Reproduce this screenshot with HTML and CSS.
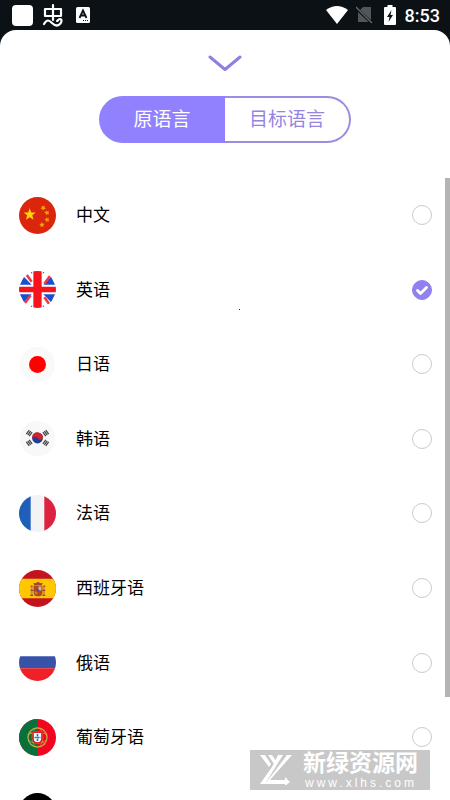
FILE: index.html
```html
<!DOCTYPE html>
<html lang="zh-CN">
<head>
<meta charset="utf-8">
<meta name="viewport" content="width=device-width, initial-scale=1">
<title>选择语言</title>
<link rel="stylesheet" href="styles.css">
</head>
<body>
<header class="status">
  <div class="status-group">
    <span class="status-block"></span>
    <svg class="glyph" viewBox="0 0 22 24" width="22" height="24" fill="none" stroke="#fff" stroke-width="2.200" stroke-linecap="round" stroke-linejoin="round"><path d="M3 6h16v7H3zM11 2v15M2 21c3-5 5-4 8-1s6 3 8 1 2-5 0-5-2 2-3 2"/></svg>
    <svg class="keyboard" viewBox="0 0 14 16" width="14" height="16"><rect width="14" height="16" rx="1.500" fill="#fff"/><path d="M3.500 11 7 3.500 10.500 11M5 8.500h4" fill="none" stroke="#0c1115" stroke-width="1.800"/><path d="M7 13.500h5" stroke="#0c1115" stroke-dasharray="1 1"/></svg>
  </div>
  <div class="status-group">
    <svg viewBox="0 0 22 18" width="22" height="18"><path d="M0 4Q11-4 22 4L11 18z" fill="#fff"/></svg>
    <svg class="sim" viewBox="0 0 17 18" width="17" height="18"><path d="M7 1h8v15H2V6z" fill="#535657"/><path d="M0 2l16 15" stroke="#0c1115" stroke-width="3"/><path d="M0 1l16 16" stroke="#66696a" stroke-width="1.300"/></svg>
    <svg class="battery" viewBox="0 0 12 20" width="12" height="20"><path d="M3.500 0h5v2H11q1 0 1 1v16q0 1-1 1H1q-1 0-1-1V3q0-1 1-1h2.500z" fill="#fff"/><path d="M7.500 5 3 12h2.500L4.500 17 9 10H6.500z" fill="#0c1115"/></svg>
    <time class="clock">8:53</time>
  </div>
</header>
<main class="sheet">
  <button class="collapse" type="button" aria-label="收起">
    <svg viewBox="0 0 34 18" width="34" height="18"><path d="M2 3 17 15.500 32 3" fill="none" stroke="#907ee0" stroke-width="3" stroke-linecap="round" stroke-linejoin="round"/></svg>
  </button>
  <div class="tabs">
    <button class="tab tab-active" type="button">原语言</button>
    <button class="tab tab-last" type="button">目标语言</button>
  </div>
  <div class="scroller">
    <div class="languages">
      <label class="row">
        <svg class="flag" viewBox="0 0 38 38"><circle cx="19" cy="19" r="19" fill="#db260d"/><path d="M11 11.500l1.600 4.300 4.600.2-3.600 2.800 1.300 4.500L11 20.700l-3.900 2.600 1.300-4.500L4.800 16l4.600-.2z" fill="#ffd40b"/><g fill="#f5a20b"><path d="M23 9l2 .8 1.500-1-.2 1.900 1.300 1.500-1.900.2-1 1.700-.8-1.900-1.900-.5 1.500-1z"/><path d="M27.500 13.800l1.500 1 1.800-.6-.7 1.800 1 1.600-1.900-.2-1.400 1.300-.4-1.900-1.600-.9 1.700-.7z"/><path d="M28 20.800l1.200 1.300 1.900-.3-.9 1.600.8 1.800-1.800-.5-1.500 1.200v-1.900l-1.600-1.100 1.800-.5z"/><path d="M23.500 25.800l.8 1.600 1.900.1-1.300 1.400.4 1.900-1.700-.8-1.700.9.3-1.900-1.400-1.300 1.900-.2z"/></g></svg>
        <span class="name">中文</span>
        <span class="choice"><input class="radio" type="radio" name="language"></span>
      </label>
      <label class="row">
        <svg class="flag" viewBox="0 0 38 38"><clipPath id="c"><circle cx="19" cy="19" r="19"/></clipPath><g clip-path="url(#c)"><path fill="#fff" d="M0 0h38v38H0z"/><g fill="#1b4fd0"><path d="M5 6l8 8H1zM33 6l-8 8h12zM5 32l8-8H1zM33 32l-8-8h12zM11 0l2.500 3V0zM27 0l-2.500 3V0zM11 38l2.500-3v3zM27 38l-2.500-3v3z"/></g><path d="M8 4l5 7M32 5l-6 8M6 33l6-8M31 34l-5-7" stroke="#f23645" stroke-width="2.600"/><path d="M19 0v38" stroke="#f5141c" stroke-width="8.500"/><path d="M0 19h38" stroke="#f5141c" stroke-width="5.500"/></g></svg>
        <span class="name">英语</span>
        <span class="choice"><input class="radio" type="radio" name="language" checked><svg class="tick" viewBox="0 0 20 20"><path d="M5.500 10.500l3 3 6-6" fill="none" stroke="#fff" stroke-width="2.800" stroke-linecap="round" stroke-linejoin="round"/></svg></span>
      </label>
      <label class="row">
        <svg class="flag" viewBox="0 0 38 38"><circle cx="19" cy="19" r="18" fill="#f9f9f9"/><circle cx="19" cy="19" r="8.700" fill="#f00"/></svg>
        <span class="name">日语</span>
        <span class="choice"><input class="radio" type="radio" name="language"></span>
      </label>
      <label class="row">
        <svg class="flag" viewBox="0 0 38 38"><circle cx="19" cy="19" r="18" fill="#f8f8f8"/><g transform="translate(19 18.500)"><circle r="5.600" fill="#1f3f93"/><path d="M-5.300-2A5.600 5.600 0 0 1 5.600 0C4 3 1 2 0 0S-4-2-5.300 1z" fill="#d3222f"/><g stroke="#444" stroke-width="1.300"><g id="bars"><path d="M-11.500-4l3 -4M-10-3l3-4M-8.500-2l3-4"/><path d="M11.500 4l-3 4M10 3l-3 4M8.500 2l-3 4"/></g><use href="#bars" transform="scale(-1 1)"/></g></g></svg>
        <span class="name">韩语</span>
        <span class="choice"><input class="radio" type="radio" name="language"></span>
      </label>
      <label class="row">
        <svg class="flag" viewBox="0 0 38 38"><g clip-path="url(#c)"><path fill="#f3f3f5" d="M0 0h38v38H0z"/><path fill="#1d5fb9" d="M0 0h12v38H0z"/><path fill="#dc2141" d="M26 0h12v38H26z"/></g></svg>
        <span class="name">法语</span>
        <span class="choice"><input class="radio" type="radio" name="language"></span>
      </label>
      <label class="row">
        <svg class="flag" viewBox="0 0 38 38"><g clip-path="url(#c)"><path fill="#c5121f" d="M0 0h38v38H0z"/><path fill="#ffc700" d="M0 9h38v20H0z"/><path d="M13 17v9M25.500 17v9" stroke="#b4925c" stroke-width="2"/><path d="M12 21h3M24 21h3M11.500 26h3M24 26h3M12 16.500h2M25 16.500h2" stroke="#a83e2a" stroke-width="1.300"/><path d="M15 16h9v7q0 4-4.500 4T15 23z" fill="#ad4820"/><path d="M20 17h3v4h-3z" fill="#d9b0b5"/><path d="M16 22h3v3h-3z" fill="#cf7a15"/><circle cx="19.500" cy="21" r="1.300" fill="#34538f"/><path d="M15.500 15.500l-.8-2.500 2.300.5L19.500 12l2.500 1.500 2.300-.5-.8 2.500z" fill="#a7442a"/></g></svg>
        <span class="name">西班牙语</span>
        <span class="choice"><input class="radio" type="radio" name="language"></span>
      </label>
      <label class="row">
        <svg class="flag" viewBox="0 0 38 38"><g clip-path="url(#c)"><path fill="#fff" d="M0 0h38v38H0z"/><path fill="#3852a8" d="M0 12.500h38V25H0z"/><path fill="#ef2028" d="M0 25h38v13H0z"/></g></svg>
        <span class="name">俄语</span>
        <span class="choice"><input class="radio" type="radio" name="language"></span>
      </label>
      <label class="row">
        <svg class="flag" viewBox="0 0 38 38"><g clip-path="url(#c)"><path fill="#f20521" d="M0 0h38v38H0z"/><path fill="#08703b" d="M0 0h19v38H0z"/></g><g fill="none" stroke="#c4a93c"><circle cx="19" cy="19" r="9.800" stroke-width="1.300"/><ellipse cx="19" cy="19" rx="5.500" ry="9.800" stroke-width=".7"/><path d="M10 16q9-6 18 0M10 22q9 6 18 0M11 13l16 13" stroke-width=".8"/></g><path d="M14.500 13.500h9V20q0 4.500-4.500 4.500T14.500 20z" fill="#fff" stroke="#e3192b" stroke-width="1.500"/><path d="M19 15.500v7M16 19h6" stroke="#2e6eac" stroke-width="1.600" stroke-dasharray="2 .5"/></svg>
        <span class="name">葡萄牙语</span>
        <span class="choice"><input class="radio" type="radio" name="language"></span>
      </label>
      <div class="row">
        <svg class="flag" viewBox="0 0 38 38"><g clip-path="url(#c)"><path d="M0 0h38v13H0z"/><path fill="#d00" d="M0 13h38v12H0z"/><path fill="#ffce00" d="M0 25h38v13H0z"/></g></svg>
      </div>
    </div>
    <span class="thumb"></span>
  </div>
</main>
<span class="speck"></span>
<aside class="watermark">
  <svg viewBox="0 0 32 30" width="32" height="30" fill="#fff"><path d="M0 0h5l6 9-2 3zM8 0h4l4 6-2 3zM18 0h5L5 29H0l12-17zM27 0h5L10 25h15v-3l5 5-5 4v-2H5z"/></svg>
  <div class="brand"><strong class="brand-name">新绿资源网</strong><span class="brand-url">www.xlhs.com</span></div>
</aside>
</body>
</html>
```

FILE: styles.css
```css
* {
  box-sizing: border-box;
}

body {
  margin: 0;
  height: 100vh;
  display: flex;
  flex-direction: column;
  overflow: hidden;
  position: relative;
  background: #0c1115;
  color: #000;
  font-family: Roboto, "Noto Sans CJK SC", sans-serif;
}

button {
  border: 0;
  padding: 0;
  background: none;
  font: inherit;
}

svg {
  display: block;
  flex: none;
}

.status {
  display: flex;
  justify-content: space-between;
  align-items: center;
  height: 30px;
  padding: 0 10px 0 12px;
}

.status-group {
  display: flex;
  align-items: center;
}

.status-block {
  width: 21px;
  height: 21px;
  border-radius: 4px;
  background: #fff;
}

.glyph {
  margin-left: 9px;
}

.keyboard {
  margin-left: 12px;
}

.sim {
  margin-left: 8px;
}

.battery {
  margin-left: 11px;
}

.clock {
  margin-left: 9px;
  color: #fff;
  font-size: 18px;
  font-weight: 500;
}

.sheet {
  flex: 1;
  min-height: 0;
  display: flex;
  flex-direction: column;
  align-items: center;
  padding-top: 24px;
  border-radius: 16px 16px 0 0;
  background: #fff;
}

.collapse {
  margin-bottom: 24px;
}

.tabs {
  display: grid;
  grid-template-columns: 1fr 1fr;
  flex: none;
  width: 56%;
  height: 47px;
  margin-bottom: 35px;
  font-size: 19px;
  line-height: 24px;
}

.tab {
  color: #9585e0;
}

.tab-active {
  border-radius: 24px 0 0 24px;
  background: #9181ff;
  color: #fff;
}

.tab-last {
  border: 2px solid #9d8de2;
  border-left: 0;
  border-radius: 0 24px 24px 0;
}

.scroller {
  position: relative;
  flex: 1;
  min-height: 0;
  width: 100%;
  overflow: hidden;
}

.languages {
  display: grid;
  grid-auto-rows: 1fr;
  min-height: 671px;
}

.row {
  display: flex;
  align-items: center;
  padding: 0 18px 0 19px;
}

.flag {
  width: 37px;
  height: 37px;
}

.name {
  flex: 1;
  margin-left: 20px;
  font-size: 17px;
  line-height: 24px;
}

.choice {
  display: grid;
  width: 20px;
  height: 20px;
}

.radio,
.tick {
  grid-area: 1 / 1;
  width: 20px;
  height: 20px;
  margin: 0;
}

.radio {
  appearance: none;
  border: 1px solid #cbcbcb;
  border-radius: 50%;
}

.radio:checked {
  border-color: #9181f0;
  background: #9181f0;
}

.tick {
  pointer-events: none;
}

.thumb {
  position: absolute;
  top: 0;
  right: 0;
  width: 5px;
  height: 519px;
  background: #b4b4b4;
}

.speck {
  position: absolute;
  top: 309px;
  left: 239px;
  width: 1px;
  height: 1px;
  background: #222;
}

.watermark {
  position: absolute;
  right: 20px;
  bottom: 10px;
  display: flex;
  align-items: center;
  gap: 11px;
  width: 180px;
  height: 40px;
  padding-left: 10px;
  background: #c8c8c8;
  color: #fff;
}

.brand {
  display: flex;
  flex-direction: column;
}

.brand-name {
  font-size: 23px;
  font-weight: 700;
  line-height: 26px;
}

.brand-url {
  padding-left: 2px;
  font-family: "Liberation Sans", sans-serif;
  font-size: 12px;
  letter-spacing: 3px;
  line-height: 12px;
}
```
